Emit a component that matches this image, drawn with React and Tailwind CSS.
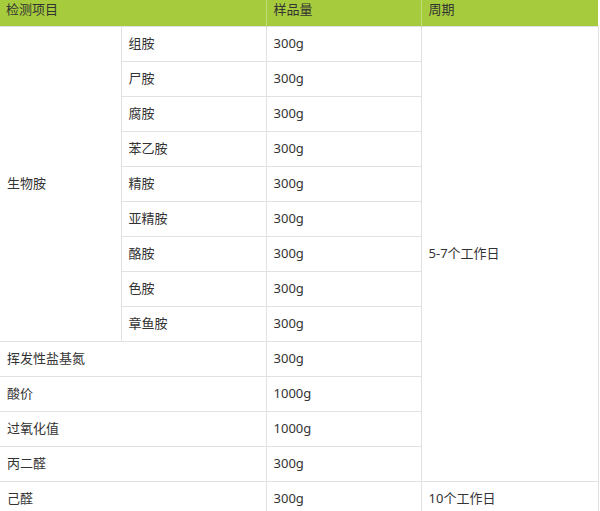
const amines = ['组胺', '尸胺', '腐胺', '苯乙胺', '精胺', '亚精胺', '酪胺', '色胺', '章鱼胺']

const others = [
  { name: '挥发性盐基氮', amount: '300g' },
  { name: '酸价', amount: '1000g' },
  { name: '过氧化值', amount: '1000g' },
  { name: '丙二醛', amount: '300g' },
]

const td = 'h-[35px] px-[7px] border border-[#e2e2e2] align-middle'

function App() {
  return (
    <div
      className="w-[600px] h-[511px] overflow-hidden bg-white text-[13px] text-[#333]"
      style={{ fontFamily: '"Noto Sans", "Noto Sans CJK SC", sans-serif' }}
    >
      <table className="w-[598px] border-collapse table-fixed">
        <colgroup>
          <col className="w-[121px]" />
          <col className="w-[145px]" />
          <col className="w-[155px]" />
          <col className="w-[177px]" />
        </colgroup>
        <thead>
          <tr className="bg-[#a6cc3d]">
            <th colSpan={2} className="h-[25px] px-[6px] pb-[6px] text-left font-normal border-r border-[#c3dc7e]">
              检测项目
            </th>
            <th className="h-[25px] px-[7px] pb-[6px] text-left font-normal border-r border-[#c3dc7e]">样品量</th>
            <th className="h-[25px] px-[7px] pb-[6px] text-left font-normal">周期</th>
          </tr>
        </thead>
        <tbody>
          {amines.map((a, i) => (
            <tr key={a}>
              {i === 0 && (
                <td rowSpan={amines.length} className={`${td} border-l-0`}>
                  生物胺
                </td>
              )}
              <td className={td}>{a}</td>
              <td className={td}>300g</td>
              {i === 0 && (
                <td rowSpan={amines.length + others.length} className={td}>
                  5-7个工作日
                </td>
              )}
            </tr>
          ))}
          {others.map((o) => (
            <tr key={o.name}>
              <td colSpan={2} className={`${td} border-l-0`}>
                {o.name}
              </td>
              <td className={td}>{o.amount}</td>
            </tr>
          ))}
          <tr>
            <td colSpan={2} className={`${td} border-l-0`}>
              己醛
            </td>
            <td className={td}>300g</td>
            <td className={td}>10个工作日</td>
          </tr>
        </tbody>
      </table>
    </div>
  )
}

export default App
